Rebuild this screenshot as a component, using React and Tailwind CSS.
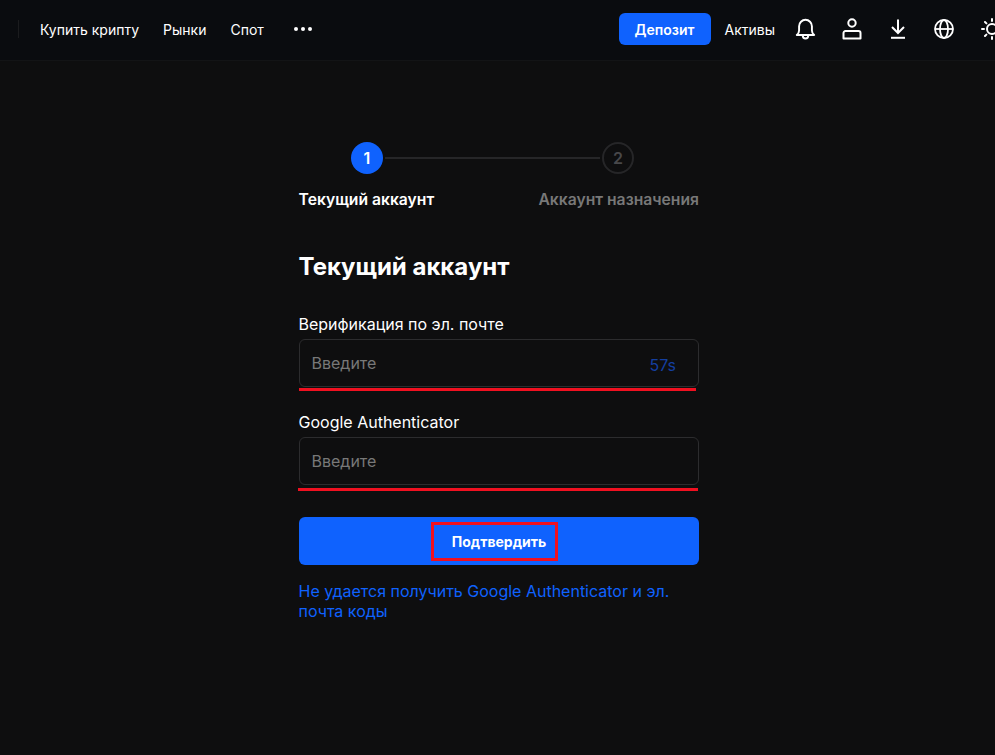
import { useState } from "react";

const font = { fontFamily: "Inter, 'Noto Sans', sans-serif" };

const BellIcon = () => (
  <svg width="21" height="22" viewBox="0 0 22 24" fill="none" stroke="currentColor" strokeWidth="2.100" strokeLinejoin="round" strokeLinecap="round">
    <path d="M1.500 18.500c1.600-1.400 2.500-2.800 2.500-5V9a7 7 0 0 1 14 0v4.500c0 2.200.9 3.600 2.500 5z" />
    <path d="M8 19c0 2 1.300 3.300 3 3.300s3-1.300 3-3.300" />
  </svg>
);

const UserIcon = () => (
  <svg width="20" height="22" viewBox="0 0 20 22" fill="none" stroke="currentColor" strokeWidth="2">
    <circle cx="10" cy="5" r="3.700" />
    <path d="M3.500 13h13a2 2 0 0 1 2 2v5.500h-17V15a2 2 0 0 1 2-2z" strokeLinejoin="round" />
  </svg>
);

const DownloadIcon = () => (
  <svg width="16" height="20" viewBox="0 0 16 20" fill="none" stroke="currentColor" strokeWidth="2">
    <path d="M8 0.500v13M2 8l6 6 6-6" />
    <path d="M1 18.800h14" />
  </svg>
);

const GlobeIcon = () => (
  <svg width="20" height="20" viewBox="0 0 20 20" fill="none" stroke="currentColor" strokeWidth="1.800">
    <circle cx="10" cy="10" r="9" />
    <ellipse cx="10" cy="10" rx="4" ry="9" />
    <path d="M1 10h18" />
  </svg>
);

const SunIcon = () => (
  <svg width="22" height="22" viewBox="0 0 22 22" fill="none" stroke="currentColor" strokeWidth="2" strokeLinecap="round" className="shrink-0">
    <circle cx="11" cy="11" r="5" />
    <path d="M11 1v2M11 19v2M1 11h2M19 11h2M4 4l1.400 1.400M16.600 16.600 18 18M4 18l1.400-1.400M16.600 5.400 18 4" />
  </svg>
);

const Field = ({ label, suffix, lineClass }) => {
  const [value, setValue] = useState("");

  return (
    <div>
      <div className="text-[16px] leading-[20px] text-white mb-[5px] -ml-[0.5px]">{label}</div>
      <div className="relative">
        <div className="h-[48px] flex items-center justify-between border border-[#2c2c2e] rounded-[6px] pl-[11.5px] pr-[22px]">
          <input
            value={value}
            onChange={(e) => setValue(e.target.value)}
            placeholder="Введите"
            className="flex-1 min-w-0 bg-transparent outline-none text-[16px] text-white placeholder:text-[#787878]"
          />
          {suffix && <span className="text-[16px] text-[#143fa0] mt-[4px]">{suffix}</span>}
        </div>
        <div className={lineClass}></div>
      </div>
    </div>
  );
};

export default function App() {
  return (
    <div className="min-h-[755px] bg-[#0e0e0f] overflow-hidden" style={font}>
      <header className="h-[61px] bg-[#0a0c0f] border-b border-[#131416] flex items-center justify-between pl-[18px] pb-[2px] overflow-hidden">
        <div className="flex items-center text-white text-[14px]">
          <div className="w-px h-[18px] bg-[#1b1c1e] mr-[21px]"></div>
          <span className="mr-[24px]">Купить крипту</span>
          <span className="mr-[24px]">Рынки</span>
          <span className="mr-[30px]">Спот</span>
          <div className="flex gap-[3px]">
            <div className="w-[4px] h-[4px] rounded-full bg-white"></div>
            <div className="w-[4px] h-[4px] rounded-full bg-white"></div>
            <div className="w-[4px] h-[4px] rounded-full bg-white"></div>
          </div>
        </div>
        <div className="flex items-center text-white -mr-[8px]">
          <button className="w-[92px] h-[32px] bg-[#0f62fe] rounded-[6px] text-[14px] font-semibold text-white mr-[14px]">
            Депозит
          </button>
          <span className="text-[14px] mr-[20px]">Активы</span>
          <div className="mr-[26px]"><BellIcon /></div>
          <div className="mr-[28px]"><UserIcon /></div>
          <div className="mr-[28px]"><DownloadIcon /></div>
          <div className="mr-[27px]"><GlobeIcon /></div>
          <SunIcon />
        </div>
      </header>

      <main className="w-[400px] ml-[299px] pt-[81px]">
        <div className="flex items-center pl-[52px] pr-[65px]">
          <div className="w-[32px] h-[32px] rounded-full bg-[#0f62fe] text-white text-[16px] font-semibold flex items-center justify-center">
            1
          </div>
          <div className="flex-1 h-[2px] bg-[#262628] mx-[2px]"></div>
          <div className="w-[32px] h-[32px] rounded-full border-2 border-[#262628] text-[#48484a] text-[16px] font-semibold flex items-center justify-center">
            2
          </div>
        </div>
        <div className="flex justify-between mt-[16px] text-[15.7px] leading-[20px] font-semibold -ml-[0.5px]">
          <span className="text-white">Текущий аккаунт</span>
          <span className="text-[#787878]">Аккаунт назначения</span>
        </div>

        <h1 className="text-[24px] leading-[32px] font-bold text-white mt-[41px] mb-[31px] -ml-[0.5px]">Текущий аккаунт</h1>

        <div className="flex flex-col gap-[25px]">
          <Field
            label="Верификация по эл. почте"
            suffix="57s"
            lineClass="absolute left-0 top-[49px] w-[397px] h-[3px] bg-[#f01020]"
          />
          <Field
            label="Google Authenticator"
            lineClass="absolute -left-[1px] top-[51px] w-[400px] h-[3px] bg-[#f01020]"
          />
        </div>

        <div className="relative mt-[32px]">
          <button className="w-full h-[48px] bg-[#0f62fe] rounded-[6px] text-[14px] font-bold text-white">
            Подтвердить
          </button>
          <div className="absolute left-[132px] top-[5px] w-[127px] h-[39px] border-[3px] border-[#f01020]"></div>
        </div>

        <a className="block mt-[16px] text-[16px] leading-[20px] text-[#0f62fe] -ml-[0.5px]">
          Не удается получить Google Authenticator и эл. почта коды
        </a>
      </main>
    </div>
  );
}
